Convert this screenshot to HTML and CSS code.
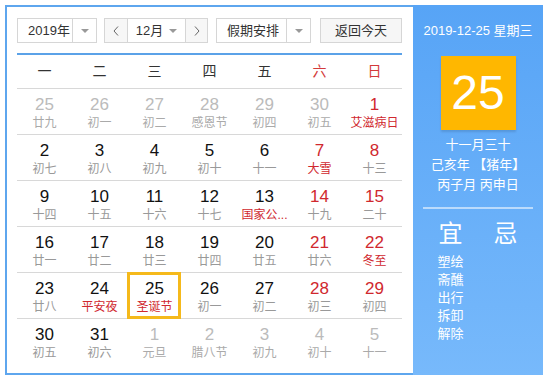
FILE: index.html
```html
<!DOCTYPE html>
<html lang="zh-CN">
<head>
<meta charset="utf-8">
<title>万年历</title>
<link rel="stylesheet" href="styles.css">
</head>
<body>
<div class="cal">
  <div class="main">
    <div class="toolbar">
      <div class="select sel-year"><span class="sel-text">2019年</span><span class="sel-arrow"><i class="tri"></i></span></div>
      <div class="month-group">
        <span class="nav"><svg width="6" height="10" viewBox="0 0 6 10"><polyline points="5,0.5 1,5 5,9.5" fill="none" stroke="#666" stroke-width="1"/></svg></span>
        <span class="month-text">12月<i class="tri"></i></span>
        <span class="nav nav-next"><svg width="6" height="10" viewBox="0 0 6 10"><polyline points="1,0.5 5,5 1,9.5" fill="none" stroke="#666" stroke-width="1"/></svg></span>
      </div>
      <div class="select sel-holiday"><span class="sel-text">假期安排</span><span class="sel-arrow"><i class="tri"></i></span></div>
      <button class="btn-today">返回今天</button>
    </div>
    <div class="weekdays">
      <span>一</span><span>二</span><span>三</span><span>四</span><span>五</span><span class="wk-red">六</span><span class="wk-red">日</span>
    </div>
    <div class="days">
      <div class="day other"><b>25</b><em>廿九</em></div>
      <div class="day other"><b>26</b><em>初一</em></div>
      <div class="day other"><b>27</b><em>初二</em></div>
      <div class="day other"><b>28</b><em>感恩节</em></div>
      <div class="day other"><b>29</b><em>初四</em></div>
      <div class="day other"><b>30</b><em>初五</em></div>
      <div class="day red"><b>1</b><em class="fest">艾滋病日</em></div>

      <div class="day"><b>2</b><em>初七</em></div>
      <div class="day"><b>3</b><em>初八</em></div>
      <div class="day"><b>4</b><em>初九</em></div>
      <div class="day"><b>5</b><em>初十</em></div>
      <div class="day"><b>6</b><em>十一</em></div>
      <div class="day red"><b>7</b><em class="fest">大雪</em></div>
      <div class="day red"><b>8</b><em>十三</em></div>

      <div class="day"><b>9</b><em>十四</em></div>
      <div class="day"><b>10</b><em>十五</em></div>
      <div class="day"><b>11</b><em>十六</em></div>
      <div class="day"><b>12</b><em>十七</em></div>
      <div class="day"><b>13</b><em class="fest" title="国家公祭日">国家公...</em></div>
      <div class="day red"><b>14</b><em>十九</em></div>
      <div class="day red"><b>15</b><em>二十</em></div>

      <div class="day"><b>16</b><em>廿一</em></div>
      <div class="day"><b>17</b><em>廿二</em></div>
      <div class="day"><b>18</b><em>廿三</em></div>
      <div class="day"><b>19</b><em>廿四</em></div>
      <div class="day"><b>20</b><em>廿五</em></div>
      <div class="day red"><b>21</b><em>廿六</em></div>
      <div class="day red"><b>22</b><em class="fest">冬至</em></div>

      <div class="day"><b>23</b><em>廿八</em></div>
      <div class="day"><b>24</b><em class="fest">平安夜</em></div>
      <div class="day today"><b>25</b><em class="fest">圣诞节</em></div>
      <div class="day"><b>26</b><em>初一</em></div>
      <div class="day"><b>27</b><em>初二</em></div>
      <div class="day red"><b>28</b><em>初三</em></div>
      <div class="day red"><b>29</b><em>初四</em></div>

      <div class="day"><b>30</b><em>初五</em></div>
      <div class="day"><b>31</b><em>初六</em></div>
      <div class="day other"><b>1</b><em>元旦</em></div>
      <div class="day other"><b>2</b><em>腊八节</em></div>
      <div class="day other"><b>3</b><em>初九</em></div>
      <div class="day other"><b>4</b><em>初十</em></div>
      <div class="day other"><b>5</b><em>十一</em></div>
    </div>
  </div>
  <aside class="panel">
    <div class="p-date">2019-12-25 星期三</div>
    <div class="p-big">25</div>
    <div class="p-lunar">
      <div>十一月三十</div>
      <div>己亥年 【猪年】</div>
      <div>丙子月 丙申日</div>
    </div>
    <div class="p-sep"></div>
    <div class="p-yiji">
      <div class="yj-col">
        <div class="yj-head">宜</div>
        <div class="yj-item">塑绘</div>
        <div class="yj-item">斋醮</div>
        <div class="yj-item">出行</div>
        <div class="yj-item">拆卸</div>
        <div class="yj-item">解除</div>
      </div>
      <div class="yj-col">
        <div class="yj-head">忌</div>
      </div>
    </div>
  </aside>
</div>
</body>
</html>
```

FILE: styles.css
```css
* { box-sizing: border-box; }
html, body { margin: 0; padding: 0; background: #fff; }
body {
  font-family: "Liberation Sans", "Noto Sans CJK SC", sans-serif;
  color: #333;
}
.cal {
  margin: 5px;
  width: 538px;
  height: 370px;
  display: flex;
}
.main {
  width: 408px;
  height: 370px;
  border: 2px solid #5ea6ee;
  border-right: none;
  padding: 11px 11px 0 10px;
}
.toolbar {
  display: flex;
  height: 25px;
  font-size: 13px;
  line-height: 23px;
  color: #333;
}
.select, .month-group {
  display: flex;
  border: 1px solid #d6d6d6;
  height: 25px;
  background: #fff;
}
.sel-year { width: 80px; }
.sel-year .sel-text { width: 55px; padding-left: 10px; }
.sel-arrow {
  width: 24px;
  border-left: 1px solid #d6d6d6;
  display: flex;
  align-items: center;
  justify-content: center;
}
.tri {
  display: inline-block;
  width: 0; height: 0;
  border-left: 4px solid transparent;
  border-right: 4px solid transparent;
  border-top: 4px solid #999;
}
.month-group { margin-left: 7px; width: 104px; }
.nav {
  width: 23px;
  display: flex;
  align-items: center;
  justify-content: center;
  border-right: 1px solid #d6d6d6;
  background: #f7f7f7;
}
.nav-next { border-right: none; border-left: 1px solid #d6d6d6; width: 22px; }
.month-text {
  flex: 1;
  display: flex;
  align-items: center;
  justify-content: center;
  gap: 6px;
}
.sel-holiday { margin-left: 8px; width: 95px; }
.sel-holiday .sel-text { width: 70px; padding-left: 10px; }
.btn-today {
  margin-left: 9px;
  width: 82px;
  height: 25px;
  border: 1px solid #d6d6d6;
  background: #f6f6f6;
  font: inherit;
  font-size: 13px;
  color: #333;
  padding: 0;
  line-height: 23px;
}
.weekdays {
  margin-top: 10px;
  border-top: 2px solid #5ba2e8;
  border-bottom: 1px solid #d8d8d8;
  height: 36px;
  display: grid;
  grid-template-columns: repeat(7, 55px);
  font-size: 14px;
  line-height: 33px;
  text-align: center;
  color: #333;
}
.wk-red { color: #d33a3a; }
.days {
  display: grid;
  grid-template-columns: repeat(7, 55px);
}
.day {
  position: relative;
  height: 46px;
  border-bottom: 1px solid #d8d8d8;
  padding-top: 6px;
  text-align: center;
}
.day:nth-last-child(-n+7) { border-bottom: none; }
.day b {
  display: block;
  font-weight: normal;
  font-size: 17px;
  line-height: 20px;
  color: #111;
}
.day em {
  display: block;
  font-style: normal;
  font-size: 12px;
  line-height: 16px;
  color: #999;
  white-space: nowrap;
}
.day.red b { color: #d0282e; }
.day em.fest { color: #d0282e; }
.day.other b { color: #bbb; }
.day.other em { color: #aaa; }
.day.other em.fest { color: #d0282e; }
.day.red.other b { color: #d0282e; }
.today::after {
  content: "";
  position: absolute;
  top: -1px; left: 0; right: 1px; bottom: -1px;
  border: 3px solid #f5b91b;
}
.panel {
  width: 130px;
  height: 370px;
  background: linear-gradient(to bottom, #57a4f6, #77b9fb);
  color: #fff;
  padding: 17px 10px 0;
  text-align: center;
}
.p-date {
  font-size: 13px;
  line-height: 18px;
}
.p-big {
  margin: 16px auto 0;
  width: 75px;
  height: 74px;
  background: #ffb700;
  font-size: 48px;
  line-height: 74px;
  box-shadow: 0 2px 2px rgba(0,0,0,0.12);
}
.p-lunar {
  margin-top: 5px;
  font-size: 13px;
  line-height: 20px;
}
.p-sep {
  margin-top: 12px;
  height: 2px;
  background: rgba(255,255,255,0.55);
}
.p-yiji {
  margin-top: 11px;
  display: flex;
}
.yj-col { width: 55px; }
.yj-head {
  font-size: 24px;
  line-height: 28px;
  margin-bottom: 5px;
}
.yj-item {
  font-size: 13px;
  line-height: 18px;
}
```
